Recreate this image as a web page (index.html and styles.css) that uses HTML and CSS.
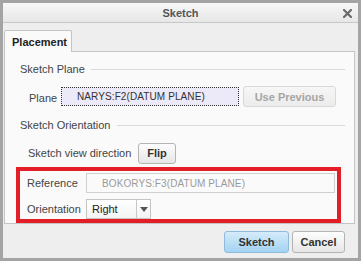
FILE: index.html
```html
<!DOCTYPE html>
<html lang="en">
<head>
<meta charset="UTF-8">
<title>Sketch</title>
<link rel="stylesheet" href="styles.css">
</head>
<body>
  <div class="window">
    <div class="titlebar">
      <span class="title">Sketch</span>
      <svg class="close" width="9" height="9" viewBox="0 0 9 9">
        <path d="M1 1 L8 8 M8 1 L1 8" stroke="#6a6a6a" stroke-width="2.2" stroke-linecap="square"/>
      </svg>
    </div>
    <div class="tabs">
      <div class="tab">Placement</div>
    </div>
    <div class="panel">
      <div class="section">
        <span>Sketch Plane</span>
        <div class="rule"></div>
      </div>
      <div class="row plane-row">
        <label class="plane-label">Plane</label>
        <div class="field focused">NARYS:F2(DATUM PLANE)</div>
        <button class="btn disabled">Use Previous</button>
      </div>
      <div class="section second">
        <span>Sketch Orientation</span>
        <div class="rule"></div>
      </div>
      <div class="row flip-row">
        <label class="flip-label">Sketch view direction</label>
        <button class="btn flip">Flip</button>
      </div>
      <div class="highlight">
        <div class="row ref-row">
          <label class="ref-label">Reference</label>
          <div class="field readonly">BOKORYS:F3(DATUM PLANE)</div>
        </div>
        <div class="row orient-row">
          <label class="ref-label">Orientation</label>
          <div class="select">
            <span class="select-value">Right</span>
            <span class="select-arrow"></span>
          </div>
        </div>
      </div>
    </div>
    <div class="footer">
      <button class="btn primary">Sketch</button>
      <button class="btn cancel">Cancel</button>
    </div>
  </div>
</body>
</html>
```

FILE: styles.css
```css
body {
  margin: 0;
  font-family: "Liberation Sans", Arial, sans-serif;
  font-size: 11px;
  color: #333;
}

.window {
  width: 361px;
  height: 261px;
  box-sizing: border-box;
  border: 3px solid #a4a4a4;
  background-color: #eeeeef;
  display: flex;
  flex-direction: column;
}

.titlebar {
  height: 19px;
  flex: none;
  border-bottom: 1px solid #c8c8c8;
  background: linear-gradient(#f7f7f7, #e7e7e7);
  display: flex;
  align-items: center;
  justify-content: center;
  position: relative;
}

.title {
  font-weight: bold;
  color: #555;
}

.close {
  position: absolute;
  right: 6px;
  top: 6px;
}

.tabs {
  height: 28px;
  flex: none;
  display: flex;
  align-items: flex-end;
  padding-left: 1px;
}

.tab {
  width: 68px;
  height: 22px;
  box-sizing: border-box;
  border: 1px solid #c4c4c4;
  border-bottom: none;
  border-radius: 2px 2px 0 0;
  background-color: #fafafb;
  font-weight: bold;
  color: #222;
  padding: 5px 0 0 7px;
  margin-bottom: -1px;
  position: relative;
}

.panel {
  height: 173px;
  flex: none;
  box-sizing: border-box;
  margin: 0 3px 0 1px;
  border: 1px solid #c4c4c4;
  background-color: #fafafb;
  display: flex;
  flex-direction: column;
}

.section {
  height: 14px;
  margin-top: 10px;
  padding: 0 9px 0 15px;
  display: flex;
  align-items: center;
  color: #444;
}

.section.second {
  margin-top: 11px;
}

.rule {
  flex: 1;
  height: 1px;
  margin-left: 6px;
  background-color: #dadada;
}

.row {
  display: flex;
  align-items: center;
}

.row label {
  color: #444;
}

.plane-row {
  height: 21px;
  margin-top: 10px;
  padding-left: 24px;
}

.plane-label {
  width: 32px;
  padding-top: 2px;
}

.field {
  height: 20px;
  box-sizing: border-box;
  padding-left: 15px;
  font-size: 10px;
  letter-spacing: 0.1px;
  display: flex;
  align-items: center;
}

.field.focused {
  width: 178px;
  height: 19px;
  border: 1px dotted #333;
  background-color: #ece9f8;
  color: #333;
  margin-right: 4px;
}

.field.readonly {
  width: 249px;
  border: 1px solid #cfcfcf;
  background-color: #fafafa;
  color: #9a9a9a;
}

.btn {
  font-family: inherit;
  font-size: 11px;
  font-weight: bold;
  color: #333;
  height: 22px;
  padding: 0;
  border: 1px solid #b4b4b4;
  border-radius: 3px;
  background: linear-gradient(#fdfdfd, #e6e6e6);
}

.btn.disabled {
  width: 93px;
  height: 21px;
  color: #a6a6a6;
  border-color: #d9d9d9;
  background: linear-gradient(#f6f6f6, #ececec);
}

.flip-row {
  height: 22px;
  margin-top: 10px;
  padding-left: 23px;
}

.flip-label {
  width: 110px;
}

.btn.flip {
  width: 38px;
  height: 21px;
}

.highlight {
  width: 325px;
  height: 56px;
  box-sizing: border-box;
  margin: 3px 0 0 11px;
  border: 4px solid #e21f26;
  padding: 2px 0 0 7px;
  display: flex;
  flex-direction: column;
  gap: 6px;
}

.ref-row, .orient-row {
  height: 20px;
}

.ref-label {
  width: 59px;
}

.select {
  width: 65px;
  height: 20px;
  box-sizing: border-box;
  border: 1px solid #c4c4c4;
  background: linear-gradient(#ffffff, #f3f3f3);
  display: flex;
  align-items: center;
}

.select-value {
  flex: 1;
  padding-left: 5px;
  color: #222;
}

.select-arrow {
  width: 13px;
  height: 18px;
  border-left: 1px solid #c8c8c8;
  position: relative;
}

.select-arrow::after {
  content: "";
  position: absolute;
  left: 3px;
  top: 7px;
  border-left: 4px solid transparent;
  border-right: 4px solid transparent;
  border-top: 5px solid #555;
}

.footer {
  flex: 1;
  display: flex;
  justify-content: flex-end;
  align-items: flex-start;
  gap: 3px;
  padding: 7px 13px 0 0;
}

.btn.primary {
  width: 65px;
  height: 22px;
  border-color: #8fbcdc;
  background: linear-gradient(#d6ebfa, #a3d3f2);
}

.btn.cancel {
  width: 53px;
  height: 22px;
}
```
